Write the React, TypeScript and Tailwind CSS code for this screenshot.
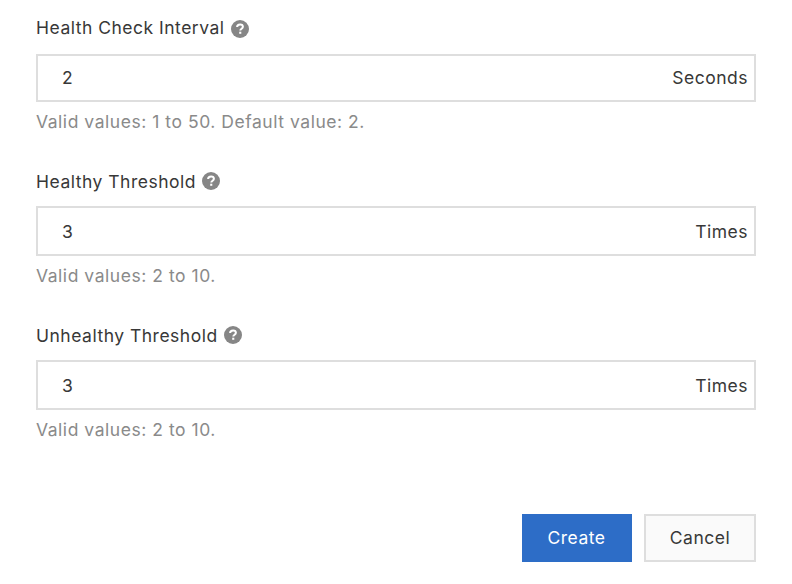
import React from "react";

function Help({ low }: { low: boolean }) {
  return (
    <svg width="18" height="18" viewBox="0 0 18 18" className={`shrink-0 ${low ? "mt-[2px]" : "-mt-[2px]"}`}>
      <circle cx="9" cy="9" r="9" fill="#868686" />
      <path d="M6.1 7.1C6.1 5.3 7.4 4.4 9.1 4.4s2.8.9 2.8 2.4c0 1.9-2.6 1.9-2.6 3.8" fill="none" stroke="#fff" strokeWidth="2" />
      <rect x="8.2" y="11.7" width="2.1" height="2.1" fill="#fff" />
    </svg>
  );
}

type FieldProps = { label: string; value: string; unit: string; hint: string; tall?: boolean };

function Field({ label, value, unit, hint, tall = true }: FieldProps) {
  return (
    <section className="flex h-[154px] flex-col">
      <div className="flex h-6 items-center gap-[6px]">
        <span>{label}</span>
        <Help low={!tall} />
      </div>
      <div className={`flex items-center justify-between border-2 border-[#dedede] pl-6 pr-[6px] ${tall ? "mt-[12px] h-[50px] pt-[2px]" : "mt-[14px] h-[48px]"}`}>
        <span>{value}</span>
        <span>{unit}</span>
      </div>
      <p className="mt-2 h-6 tracking-[0.54px] text-[#8a8a8a]">{hint}</p>
    </section>
  );
}

export default function App() {
  return (
    <main className="h-[584px] w-[792px] bg-white px-9 pt-4 font-['Inter',sans-serif] text-[17.5px] leading-6 tracking-[0.5px] text-[#383838]">
      <Field label="Health Check Interval" value="2" unit="Seconds" hint="Valid values: 1 to 50. Default value: 2." tall={false} />
      <Field label="Healthy Threshold" value="3" unit="Times" hint="Valid values: 2 to 10." />
      <Field label="Unhealthy Threshold" value="3" unit="Times" hint="Valid values: 2 to 10." />
      <div className="mt-9 flex justify-end gap-3">
        <button className="h-12 w-[110px] bg-[#2d6dc7] pr-px tracking-[0.5px] text-white">Create</button>
        <button className="h-12 w-[112px] border-2 border-[#dedede] bg-[#fafafa] tracking-[0.5px]">Cancel</button>
      </div>
    </main>
  );
}
